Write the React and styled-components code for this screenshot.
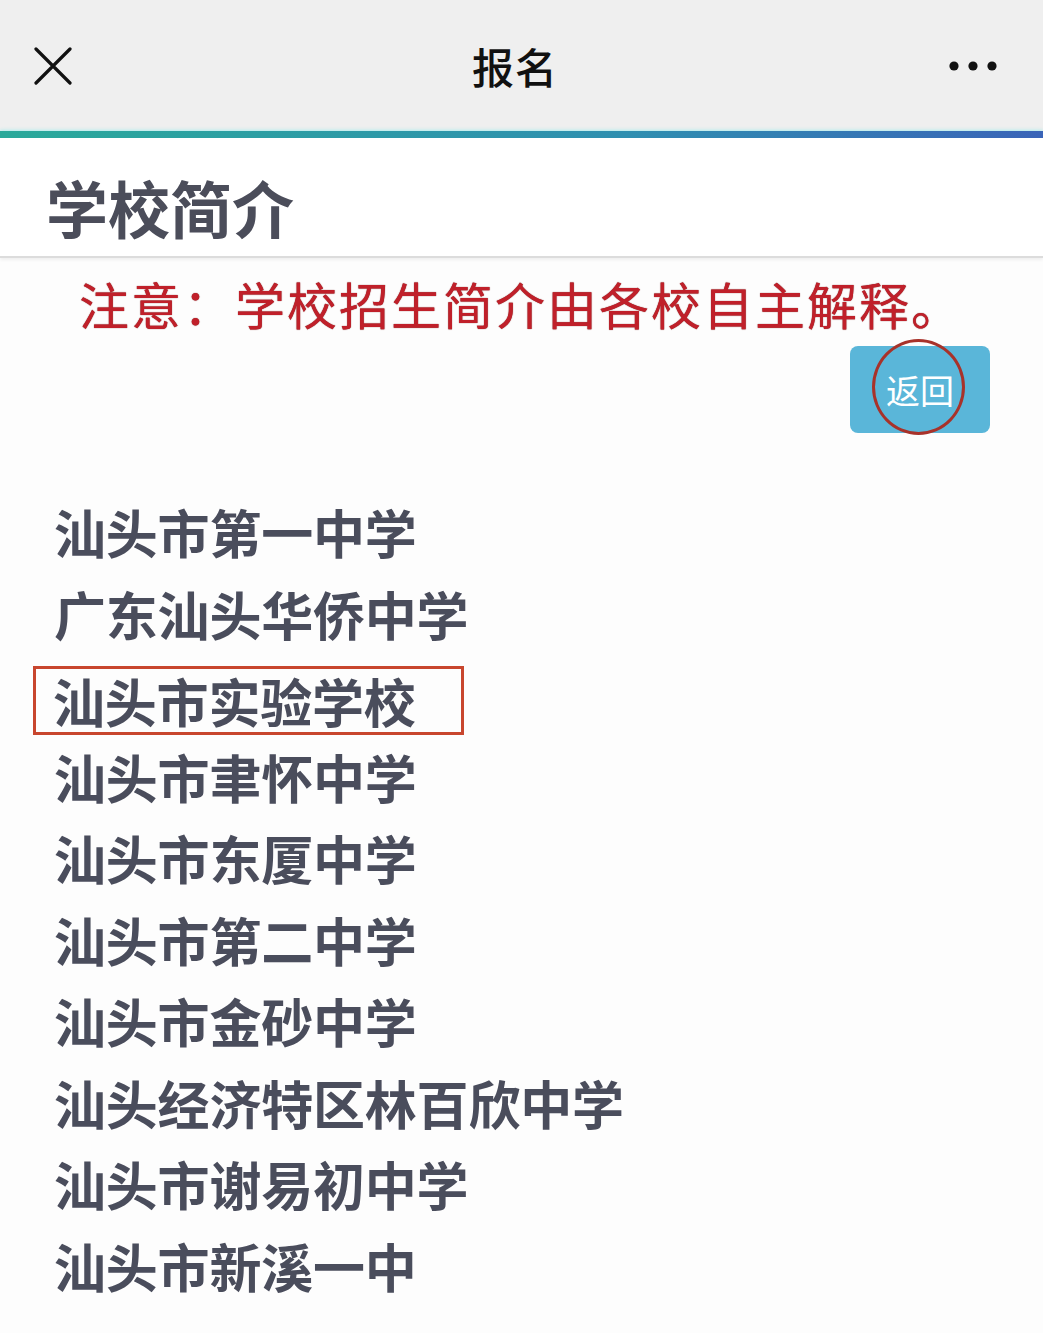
import React from "react";
import styled, { createGlobalStyle } from "styled-components";

const GlobalStyle = createGlobalStyle`
  body {
    margin: 0;
    background: #ffffff;
    font-family: "Noto Sans CJK SC", "Noto Sans", sans-serif;
  }
`;

const Page = styled.div`
  width: 1043px;
  min-height: 1333px;
  background: #fdfdfd;
  overflow: hidden;
`;

const TopBar = styled.header`
  height: 131px;
  background: #efefef;
  display: flex;
  align-items: center;
  justify-content: space-between;
  padding: 0 46px 0 33px;
  box-sizing: border-box;
`;

const BarTitle = styled.h1`
  margin: 0;
  font-size: 42px;
  font-weight: 500;
  color: #111;
  letter-spacing: 1px;
  transform: translateX(4px);
`;

const IconButton = styled.span`
  display: flex;
  align-items: center;
  justify-content: center;
  width: ${(p) => p.w}px;
  height: 60px;
`;

const AccentLine = styled.div`
  height: 7px;
  background: linear-gradient(90deg, #2aa99a 0%, #2f8fb0 60%, #3a64b8 100%);
  box-shadow: 0 0 4px rgba(80, 230, 230, 0.6);
`;

const SectionHead = styled.div`
  padding: 32px 0 12px 46px;
  border-bottom: 2px solid #dcdcdc;
  box-shadow: 0 2px 3px rgba(0, 0, 0, 0.06);
  background: #fff;
`;

const SectionTitle = styled.h2`
  margin: 0;
  font-size: 62px;
  line-height: 74px;
  font-weight: 700;
  color: #4b4d5a;
  letter-spacing: 0;
`;

const Notice = styled.p`
  margin: 15px 0 0;
  padding-left: 79px;
  font-size: 50px;
  line-height: 60px;
  font-weight: 400;
  color: #c0202a;
  text-shadow: 0 0 1px #6a1010;
  letter-spacing: 2px;
  white-space: nowrap;
`;

const Actions = styled.div`
  display: flex;
  justify-content: flex-end;
  padding: 13px 53px 0 0;
`;

const BackButton = styled.button`
  position: relative;
  width: 140px;
  height: 87px;
  border: none;
  border-radius: 8px;
  background: #5ab6d9;
  color: #fff;
  font-family: inherit;
  font-size: 34px;
  padding: 0;
  cursor: pointer;
`;

const Circle = styled.span`
  position: absolute;
  left: 22px;
  top: -7px;
  width: 93px;
  height: 96px;
  border: 3px solid #a8322a;
  border-radius: 50%;
  box-sizing: border-box;
  pointer-events: none;
`;

const SchoolList = styled.ul`
  list-style: none;
  margin: 58px 0 0;
  padding: 0 0 0 54px;
`;

const SchoolRow = styled.li`
  height: 81.5px;
  display: flex;
  align-items: center;
`;

const SchoolName = styled.span`
  font-size: 52px;
  line-height: ${(p) => (p.marked ? "63px" : "81.5px")};
  font-weight: 700;
  color: #4a4d5c;
  letter-spacing: -0.2px;
  white-space: nowrap;
  ${(p) =>
    p.marked &&
    `
    border: 3px solid #c8462e;
    margin: 12px 0 0 -21px;
    padding: 0 45px 0 17px;
  `}
`;

const schools = [
  "汕头市第一中学",
  "广东汕头华侨中学",
  "汕头市实验学校",
  "汕头市聿怀中学",
  "汕头市东厦中学",
  "汕头市第二中学",
  "汕头市金砂中学",
  "汕头经济特区林百欣中学",
  "汕头市谢易初中学",
  "汕头市新溪一中",
];

export default function App() {
  return (
    <Page>
      <GlobalStyle />
      <TopBar>
        <IconButton w={40}>
          <svg width="38" height="38" viewBox="0 0 38 38">
            <path d="M2 2 L36 36 M36 2 L2 36" stroke="#111" strokeWidth="3.2" strokeLinecap="round" />
          </svg>
        </IconButton>
        <BarTitle>报名</BarTitle>
        <IconButton w={48}>
          <svg width="48" height="12" viewBox="0 0 48 12">
            <circle cx="5" cy="6" r="4.6" fill="#111" />
            <circle cx="24" cy="6" r="4.6" fill="#111" />
            <circle cx="43" cy="6" r="4.6" fill="#111" />
          </svg>
        </IconButton>
      </TopBar>
      <AccentLine />
      <SectionHead>
        <SectionTitle>学校简介</SectionTitle>
      </SectionHead>
      <Notice>注意：学校招生简介由各校自主解释。</Notice>
      <Actions>
        <BackButton>
          返回
          <Circle />
        </BackButton>
      </Actions>
      <SchoolList>
        {schools.map((name, i) => (
          <SchoolRow key={name}>
            <SchoolName marked={i === 2}>{name}</SchoolName>
          </SchoolRow>
        ))}
      </SchoolList>
    </Page>
  );
}
